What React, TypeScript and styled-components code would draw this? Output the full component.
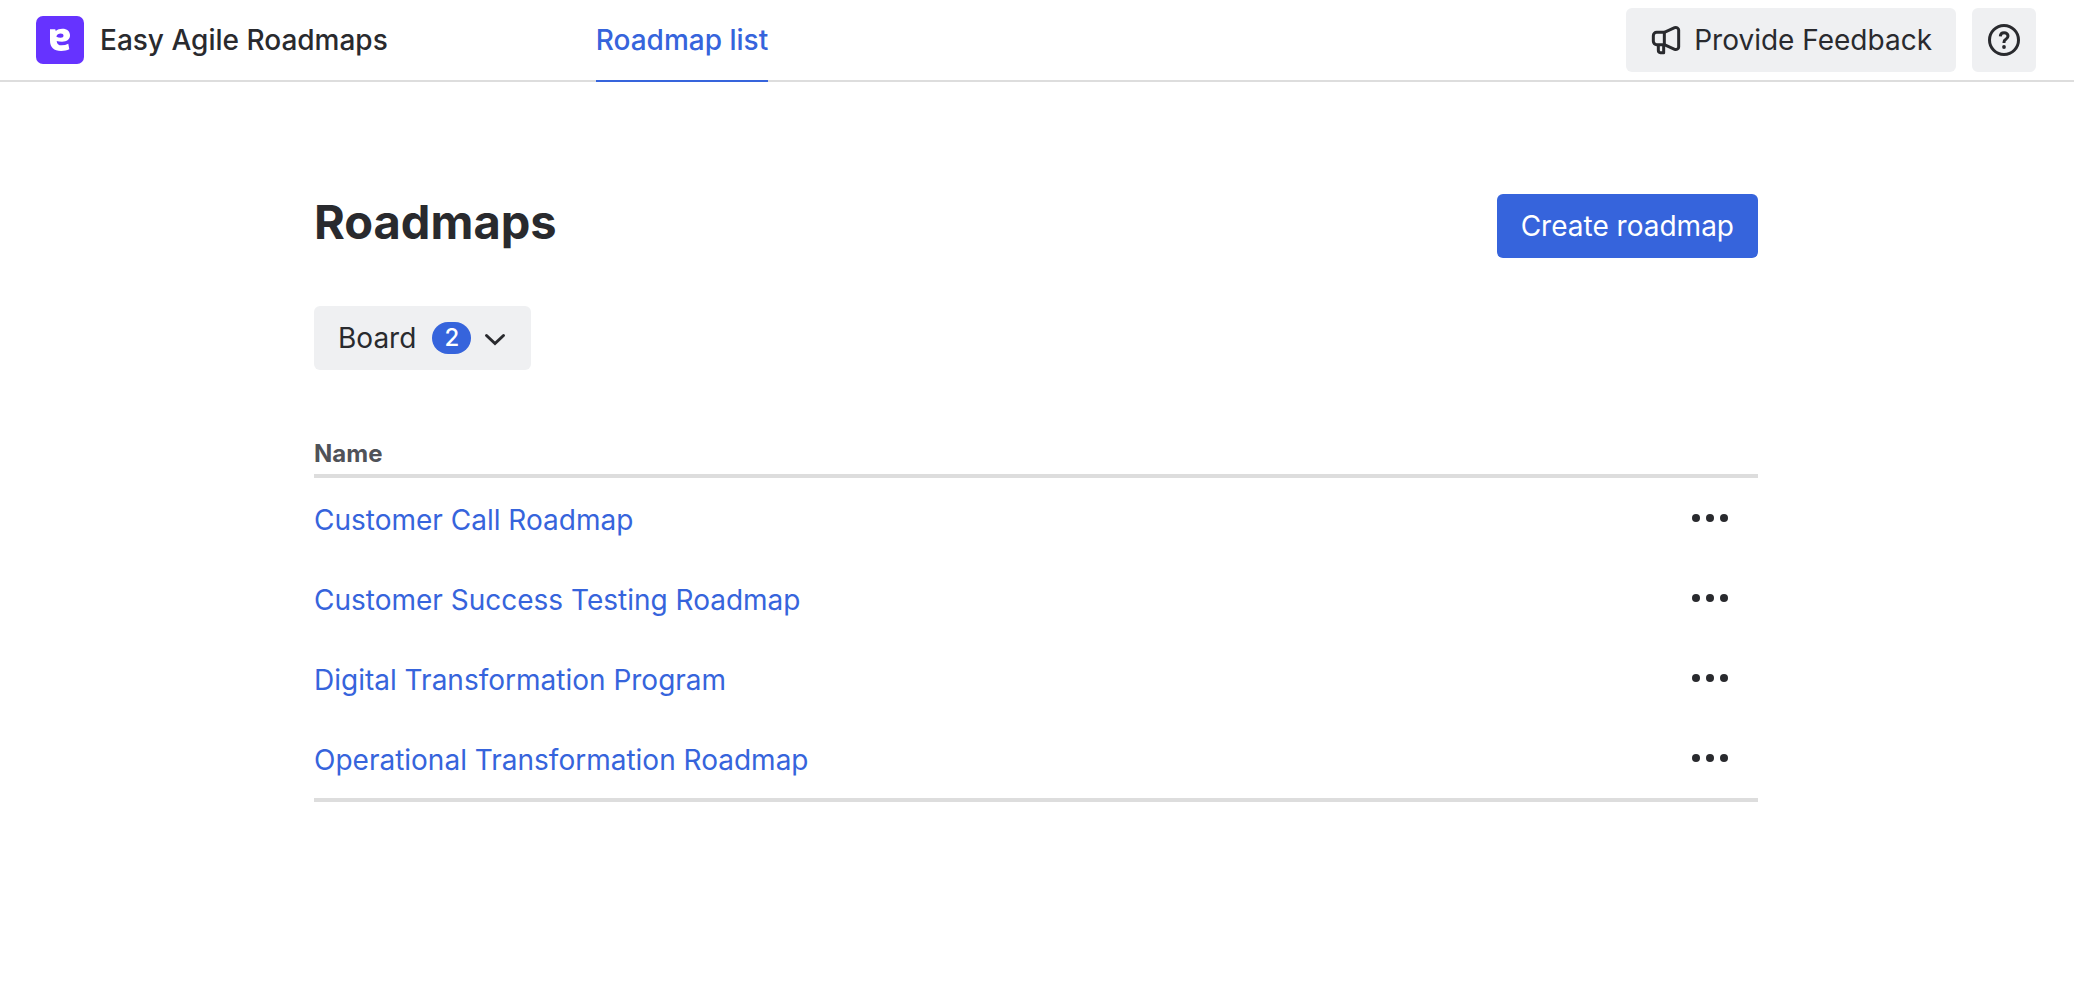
import React from "react";
import styled, { createGlobalStyle } from "styled-components";

const GlobalStyle = createGlobalStyle`
  *, *::before, *::after { box-sizing: border-box; }
  body {
    margin: 0;
    background: #ffffff;
    color: #292a2e;
    font-family: Inter, "Liberation Sans", sans-serif;
    font-size: 28px;
    line-height: 40px;
  }
`;

const Header = styled.header`
  display: flex;
  align-items: stretch;
  min-height: 82px;
  padding: 0 38px 0 36px;
  border-bottom: 2px solid #dddddd;
`;

const Brand = styled.div`
  display: flex;
  align-items: center;
  gap: 16px;
  font-weight: 500;
  white-space: nowrap;
`;

const Nav = styled.nav`
  display: flex;
  flex: 1;
  margin-left: 208px;
`;

const Tab = styled.a`
  display: flex;
  align-items: center;
  margin-bottom: -2px;
  border-bottom: 2px solid #3664dc;
  color: #3664dc;
  font-weight: 500;
  text-decoration: none;
  white-space: nowrap;
`;

const Actions = styled.div`
  display: flex;
  align-items: center;
  gap: 16px;
`;

const Button = styled.button<{ $primary?: boolean; $square?: boolean }>`
  display: flex;
  align-items: center;
  justify-content: center;
  gap: 12px;
  height: 64px;
  min-width: 64px;
  padding: 0 ${(p) => (p.$square ? 0 : 24)}px;
  border: 0;
  border-radius: 6px;
  background: ${(p) => (p.$primary ? "#3664dc" : "#eff0f2")};
  color: ${(p) => (p.$primary ? "#ffffff" : "#292a2e")};
  font: inherit;
  white-space: nowrap;
  cursor: pointer;
`;

const Page = styled.main`
  display: flex;
  flex-direction: column;
  align-items: stretch;
  gap: 48px;
  max-width: 1538px;
  margin: 0 auto;
  padding: 112px 48px 48px 46px;
`;

const TitleRow = styled.div`
  display: flex;
  align-items: flex-start;
  justify-content: space-between;
`;

const Title = styled.h1`
  margin: 0;
  font-size: 47px;
  font-weight: 700;
  line-height: 56px;
`;

const Filters = styled.div`
  display: flex;
`;

const Badge = styled.span`
  min-width: 39px;
  margin-left: 4px;
  border-radius: 16px;
  background: #3664dc;
  color: #ffffff;
  font-size: 24px;
  font-weight: 500;
  line-height: 32px;
  text-align: center;
`;

const Table = styled.table`
  width: 100%;
  margin-top: 16px;
  border-collapse: separate;
  border-spacing: 0;
  border-bottom: 4px solid #dddddd;
`;

const HeadCell = styled.th`
  height: 44px;
  padding: 0;
  border-bottom: 4px solid #dddddd;
  color: #505258;
  font-size: 24px;
  font-weight: 700;
  line-height: 32px;
  text-align: left;
`;

const Cell = styled.td`
  height: 80px;
  padding: 0;
`;

const RoadmapLink = styled.a`
  display: block;
  padding-top: 4px;
  color: #3664dc;
  text-decoration: none;
`;

const MoreCell = styled(Cell)`
  width: 96px;
`;

const MoreButton = styled.button`
  display: flex;
  align-items: center;
  justify-content: center;
  width: 96px;
  height: 64px;
  padding: 0;
  border: 0;
  background: transparent;
  color: #292a2e;
  cursor: pointer;
`;

const Logo = () => (
  <svg width="48" height="48" viewBox="0 0 48 48" aria-hidden="true">
    <rect width="48" height="48" rx="7" fill="#6633ff" />
    <path
      fill="#ffffff"
      fillRule="evenodd"
      d="M14 13.200h5.200l.6 1.800C21.500 13.400 23.600 12.700 26.300 12.700c4.800 0 7.700 2.600 7.700 6.600 0 4.200-3 6.400-8 6.400-2 0-3.800-.3-5.300-.8.2 3 1.700 4.400 5 4.400 2.300 0 4.500-.5 6.600-1.500l1 5.500c-2.200 1-5 1.700-8.200 1.700C17.800 35 14 31.300 14 24.500zM20.400 20.800c1.200.6 2.800.9 4.300.9 1.900 0 2.800-.7 2.800-2 0-1.400-1-2.200-2.800-2.200-2 0-4 1-4.300 3.300z"
    />
  </svg>
);

const Megaphone = () => (
  <svg
    width="32"
    height="32"
    viewBox="0 0 96 96"
    fill="none"
    stroke="currentColor"
    strokeWidth="9"
    strokeLinejoin="round"
    aria-hidden="true"
  >
    <path d="M43 25H20a10 10 0 0 0-10 10v17a10 10 0 0 0 10 10h23z" />
    <path d="M43 25 74 11c6-2 12 2 12 7v51c0 5-6 9-12 7L43 62" />
    <path d="M25 62v17c0 4 2 7 6 7h10V62" />
  </svg>
);

const Help = () => (
  <svg width="32" height="32" viewBox="0 0 32 32" fill="none" stroke="currentColor" aria-hidden="true">
    <circle cx="16" cy="16" r="14.500" strokeWidth="3" />
    <path
      d="M12.300 12.400c.1-2.200 1.700-3.700 3.800-3.700 2.200 0 3.900 1.400 3.900 3.400 0 1.600-.8 2.400-2.100 3.200-1.300.8-1.900 1.500-1.900 3v.8"
      strokeWidth="3"
    />
    <circle cx="16" cy="23" r="1.900" fill="currentColor" stroke="none" />
  </svg>
);

const Chevron = () => (
  <svg width="24" height="24" viewBox="0 0 24 24" fill="none" aria-hidden="true">
    <path d="m3.500 9.500 8.500 8 8.500-8" stroke="currentColor" strokeWidth="3" strokeLinecap="round" />
  </svg>
);

const Dots = () => (
  <svg width="36" height="8" viewBox="0 0 36 8" fill="currentColor" aria-hidden="true">
    <circle cx="4" cy="4" r="4" />
    <circle cx="18" cy="4" r="4" />
    <circle cx="32" cy="4" r="4" />
  </svg>
);

const roadmaps = [
  "Customer Call Roadmap",
  "Customer Success Testing Roadmap",
  "Digital Transformation Program",
  "Operational Transformation Roadmap",
];

export default function App() {
  return (
    <>
      <GlobalStyle />
      <Header>
        <Brand>
          <Logo />
          <span>Easy Agile Roadmaps</span>
        </Brand>
        <Nav>
          <Tab href="#roadmaps" aria-current="page">Roadmap list</Tab>
        </Nav>
        <Actions>
          <Button type="button">
            <Megaphone />
            Provide Feedback
          </Button>
          <Button type="button" $square aria-label="Help">
            <Help />
          </Button>
        </Actions>
      </Header>
      <Page>
        <TitleRow>
          <Title>Roadmaps</Title>
          <Button type="button" $primary>Create roadmap</Button>
        </TitleRow>
        <Filters>
          <Button type="button" aria-haspopup="listbox">
            Board
            <Badge>2</Badge>
            <Chevron />
          </Button>
        </Filters>
        <Table id="roadmaps">
          <thead>
            <tr>
              <HeadCell scope="col" colSpan={2}>Name</HeadCell>
            </tr>
          </thead>
          <tbody>
            {roadmaps.map((name) => (
              <tr key={name}>
                <Cell>
                  <RoadmapLink href="#roadmap">{name}</RoadmapLink>
                </Cell>
                <MoreCell>
                  <MoreButton type="button" aria-label={`More actions for ${name}`}>
                    <Dots />
                  </MoreButton>
                </MoreCell>
              </tr>
            ))}
          </tbody>
        </Table>
      </Page>
    </>
  );
}
